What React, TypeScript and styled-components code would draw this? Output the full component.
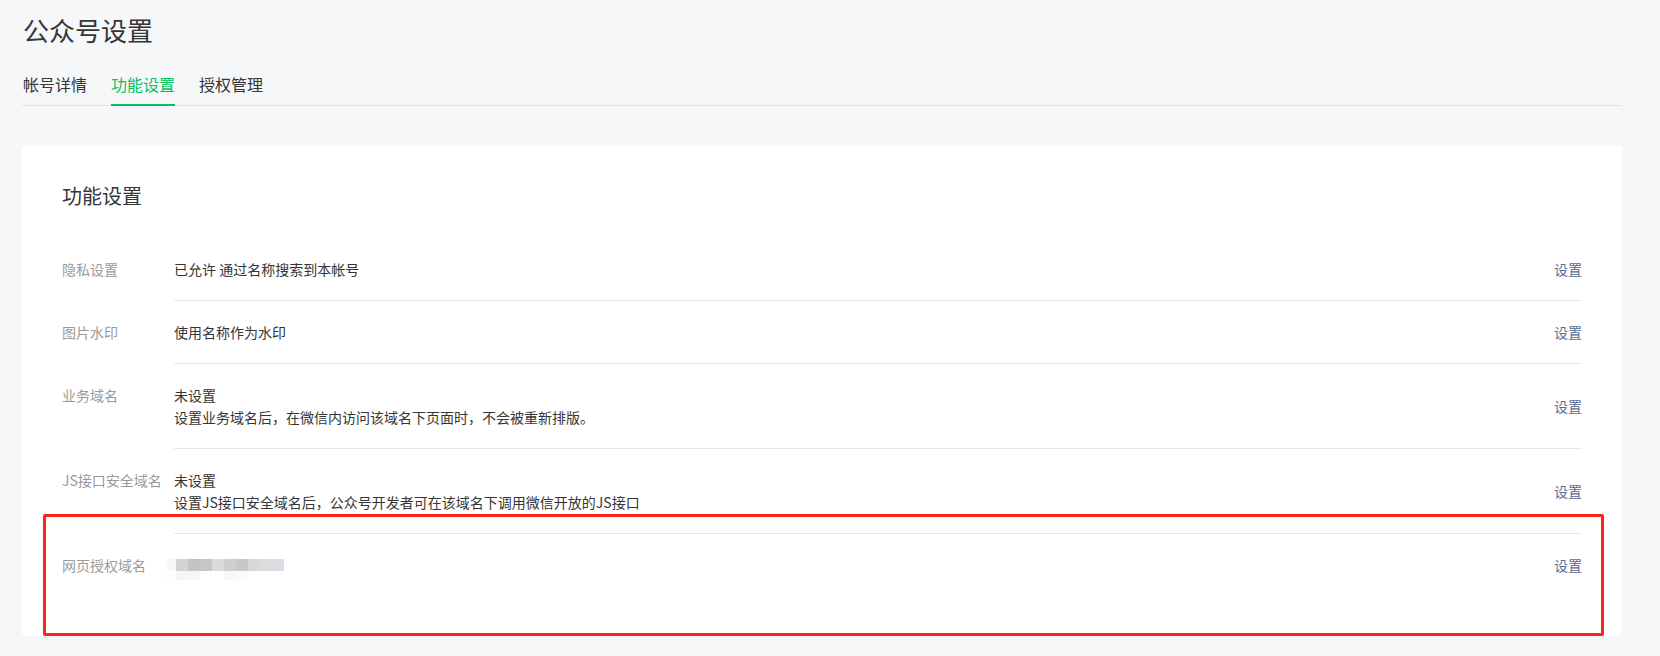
import React from 'react';
import styled, { createGlobalStyle } from 'styled-components';

const GlobalStyle = createGlobalStyle`
  html, body {
    margin: 0;
    padding: 0;
    background: #f6f7f9;
  }
  body {
    font-family: "Noto Sans CJK SC", "Noto Sans", sans-serif;
    color: #353535;
    -webkit-font-smoothing: antialiased;
  }
`;

const Page = styled.div`
  width: 1660px;
  min-height: 656px;
  box-sizing: border-box;
  padding: 12px 38px 20px 22px;
`;

const PageTitle = styled.h1`
  margin: 0 0 24px 1px;
  font-size: 26px;
  line-height: 36px;
  font-weight: 400;
  color: #353535;
`;

const TabBar = styled.div`
  display: flex;
  gap: 24px;
  border-bottom: 1px solid #e2e3e6;
  padding-left: 1px;
`;

const Tab = styled.div<{ $active?: boolean }>`
  font-size: 16px;
  line-height: 24px;
  padding-bottom: 8px;
  margin-bottom: -1px;
  color: ${(p) => (p.$active ? '#07c160' : '#353535')};
  border-bottom: 2px solid ${(p) => (p.$active ? '#07c160' : 'transparent')};
  cursor: pointer;
`;

const Card = styled.section`
  position: relative;
  margin-top: 40px;
  background: #fff;
  border-radius: 4px;
  padding: 40px;
`;

const CardTitle = styled.h2`
  margin: 0 0 32px;
  font-size: 20px;
  line-height: 20px;
  font-weight: 400;
  color: #353535;
`;

const Row = styled.div`
  display: flex;
  align-items: flex-start;
`;

const Label = styled.div<{ $first?: boolean }>`
  width: 112px;
  flex-shrink: 0;
  padding-top: ${(p) => (p.$first ? 20 : 21)}px;
  font-size: 14px;
  line-height: 22px;
  color: #9a9a9a;
  white-space: nowrap;
`;

const Body = styled.div<{ $first?: boolean }>`
  flex: 1;
  display: flex;
  align-items: center;
  padding: 20px 0;
  border-top: ${(p) => (p.$first ? 'none' : '1px solid #e7e7eb')};
`;

const Content = styled.div`
  font-size: 14px;
  line-height: 22px;
  color: #353535;
`;

const Line = styled.div``;

const Action = styled.a`
  margin-left: auto;
  font-size: 14px;
  line-height: 22px;
  color: #576b95;
  text-decoration: none;
  cursor: pointer;
`;

const Mosaic = styled.div`
  display: flex;
  flex-direction: column;
  height: 22px;
  justify-content: center;
  margin-left: -8px;
`;

const MosaicRow = styled.div<{ $faint?: boolean }>`
  display: flex;
  height: ${(p) => (p.$faint ? 9 : 12)}px;
  margin-bottom: ${(p) => (p.$faint ? -9 : 0)}px;
`;

const Cell = styled.span<{ $w?: number }>`
  display: block;
  width: ${(p) => p.$w ?? 12}px;
  height: 100%;
`;

const Annotation = styled.div`
  position: absolute;
  left: 21px;
  top: 368px;
  width: 1561px;
  height: 122px;
  box-sizing: border-box;
  border: 3px solid #ff2419;
  border-radius: 2px;
  pointer-events: none;
`;

const topCells = ['#f6f6f4', '#d3d3d0', '#c3c2c4', '#c6c6c6', '#dadcda', '#ccd0d0', '#c8c8c8', '#d8d8d8', '#dcdcd8', '#dcdce2'];
const faintCells = ['#fdfdfc', '#f5f5f3', '#f6f6f5', '#fff', '#fff', '#f8f8f8', '#fafafa'];

type Setting = { label: string; lines: string[]; blurred?: boolean };

const settings: Setting[] = [
  { label: '隐私设置', lines: ['已允许 通过名称搜索到本帐号'] },
  { label: '图片水印', lines: ['使用名称作为水印'] },
  { label: '业务域名', lines: ['未设置', '设置业务域名后，在微信内访问该域名下页面时，不会被重新排版。'] },
  { label: 'JS接口安全域名', lines: ['未设置', '设置JS接口安全域名后，公众号开发者可在该域名下调用微信开放的JS接口'] },
  { label: '网页授权域名', lines: [], blurred: true },
];

export default function App() {
  return (
    <>
      <GlobalStyle />
      <Page>
        <PageTitle>公众号设置</PageTitle>
        <TabBar>
          <Tab>帐号详情</Tab>
          <Tab $active>功能设置</Tab>
          <Tab>授权管理</Tab>
        </TabBar>
        <Card>
          <CardTitle>功能设置</CardTitle>
          {settings.map((s, i) => (
            <Row key={s.label}>
              <Label $first={i === 0}>{s.label}</Label>
              <Body $first={i === 0}>
                <Content>
                  {s.blurred ? (
                    <Mosaic>
                      <MosaicRow>
                        {topCells.map((c, j) => (
                          <Cell key={j} $w={j === 0 ? 10 : 12} style={{ background: c, borderRadius: j === 0 ? '5px 0 0 5px' : 0 }} />
                        ))}
                      </MosaicRow>
                      <MosaicRow $faint>
                        {faintCells.map((c, j) => (
                          <Cell key={j} $w={j === 0 ? 10 : 12} style={{ background: c }} />
                        ))}
                      </MosaicRow>
                    </Mosaic>
                  ) : (
                    s.lines.map((l) => <Line key={l}>{l}</Line>)
                  )}
                </Content>
                <Action>设置</Action>
              </Body>
            </Row>
          ))}
          <Annotation />
        </Card>
      </Page>
    </>
  );
}
